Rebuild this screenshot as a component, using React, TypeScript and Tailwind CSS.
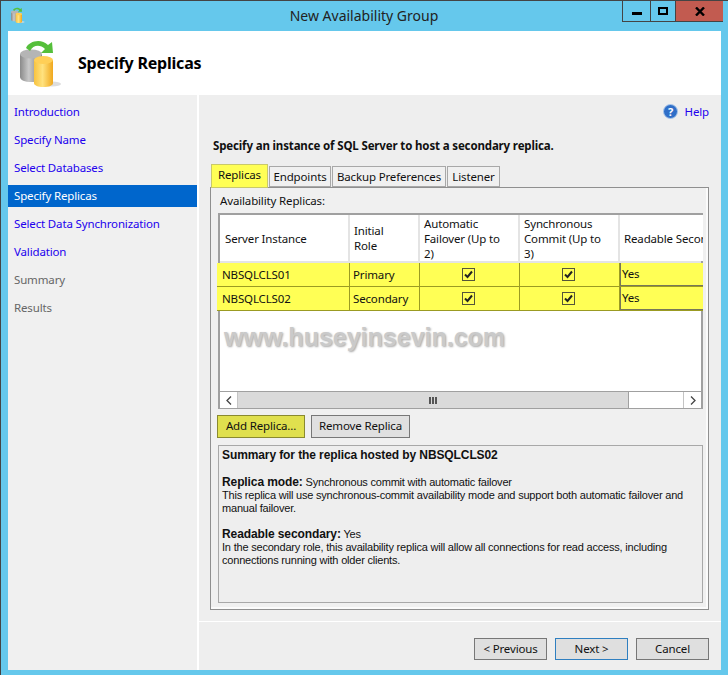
const ui = { fontFamily: '"Noto Sans", sans-serif' };
const arial = { fontFamily: '"Liberation Sans", sans-serif' };

function ReplicaIcon({ size }: { size: number }) {
  return (
    <svg width={size} height={size} viewBox="0 0 48 48">
      <defs>
        <linearGradient id={`g${size}`} x1="0" x2="1" y1="0" y2="0">
          <stop offset="0" stopColor="#8a8a8a" />
          <stop offset="0.4" stopColor="#c9c9c9" />
          <stop offset="1" stopColor="#777" />
        </linearGradient>
        <linearGradient id={`y${size}`} x1="0" x2="1" y1="0" y2="0">
          <stop offset="0" stopColor="#f8c33f" />
          <stop offset="0.45" stopColor="#ffe27f" />
          <stop offset="1" stopColor="#f0a81e" />
        </linearGradient>
      </defs>
      <ellipse cx="32" cy="45" rx="9" ry="2.5" fill="#dddddd" />
      <path d="M0 15v23c0 3 5 5 11 5s11-2 11-5V15z" fill={`url(#g${size})`} />
      <ellipse cx="11" cy="15" rx="11" ry="4.5" fill="#b5b5b5" />
      <path d="M14 21v23c0 2.500 4 4 9.500 4s9.500-1.500 9.500-4V21z" fill={`url(#y${size})`} />
      <ellipse cx="23.500" cy="21" rx="9.500" ry="4" fill="#ffcf57" />
      <path d="M6 9C9 2 21-1 28 6l4-3 1 11H21l4-4C20 5 13 6 10 12z" fill="#55bf3b" />
    </svg>
  );
}

function Check() {
  return (
    <div className="mr-[2px] flex h-[13px] w-[13px] items-center justify-center border border-[#55553a]">
      <svg width="9" height="9" viewBox="0 0 9 9">
        <path d="M1 4.500 3.500 7 8 1.500" fill="none" stroke="#222" strokeWidth="2" />
      </svg>
    </div>
  );
}

function Btn({ label, className }: { label: string; className: string }) {
  return (
    <div className={`flex items-center justify-center border pb-[2px] text-[#111] ${className}`}>{label}</div>
  );
}

const cols = "grid grid-cols-[130px_70px_100px_100px_83px]";

const navItems = [
  { label: "Introduction", tone: "text-[#2200ee]" },
  { label: "Specify Name", tone: "text-[#2200ee]" },
  { label: "Select Databases", tone: "text-[#2200ee]" },
  { label: "Specify Replicas", tone: "bg-[#0066cc] text-white" },
  { label: "Select Data Synchronization", tone: "text-[#2200ee]" },
  { label: "Validation", tone: "text-[#2200ee]" },
  { label: "Summary", tone: "text-[#666]" },
  { label: "Results", tone: "text-[#666]" },
];

const headers = [
  ["Server Instance"],
  ["Initial", "Role"],
  ["Automatic", "Failover (Up to", "2)"],
  ["Synchronous", "Commit (Up to", "3)"],
  ["Readable Secondary"],
];

const rows = ["NBSQLCLS01", "NBSQLCLS02"];
const roles = ["Primary", "Secondary"];

export default function App() {
  return (
    <div style={ui} className="flex h-[675px] w-[728px] flex-col overflow-hidden border-l border-t border-[#444] bg-[#65c8ec] text-[11.5px] leading-[15px] tracking-[-0.15px] text-[#111]">
      {/* title bar */}
      <div className="grid h-[30px] grid-cols-[1fr_auto_1fr] pl-[4px] pr-[5px]">
        <div className="pl-[6px] pt-[6px]">
          <ReplicaIcon size={16} />
        </div>
        <div className="pt-[6px] text-[14px] leading-[18px] tracking-normal text-[#222]">New Availability Group</div>
        <div className="flex justify-end">
          <div className="flex h-[21px] border-b border-l border-[#444] bg-[#65c8ec]">
            <div className="flex w-[28px] items-center justify-center border-r border-[#444]">
              <div className="h-[3px] w-[10px] translate-y-[2px] bg-black" />
            </div>
            <div className="flex w-[25px] items-center justify-center border-r border-[#444]">
              <div className="h-[8px] w-[10px] border-2 border-black" />
            </div>
            <div className="flex w-[47px] items-center justify-center bg-[#c25b50]">
              <svg width="10" height="9" viewBox="0 0 10 9">
                <path d="M1 .5 9 8.500M9 .5 1 8.500" stroke="#000" strokeWidth="2.400" />
              </svg>
            </div>
          </div>
        </div>
      </div>

      {/* dialog */}
      <div className="ml-[7px] flex h-[639px] w-[713px] flex-col bg-white">
        <div className="flex h-[64px] items-center pl-[12px]">
          <ReplicaIcon size={48} />
          <div className="ml-[10px] text-[16px] font-bold tracking-[-0.2px] text-black">Specify Replicas</div>
        </div>

        <div className="flex flex-1">
          <div className="flex w-[189px] flex-col gap-[6px] bg-[#f0f0f0] pt-[6px]">
            {navItems.map((n) => (
              <div key={n.label} className={`flex h-[22px] items-center pb-[2px] pl-[6px] ${n.tone}`}>
                {n.label}
              </div>
            ))}
          </div>
          <div className="ml-[2px] flex flex-1 flex-col bg-[#eeeeee] pl-[11px] pr-[12px]">
            <div className="flex h-[34px] items-center justify-end gap-[7px] pb-[2px] text-[#2200ee]">
              <svg width="15" height="15" viewBox="0 0 15 15">
                <circle cx="7.500" cy="7.500" r="7" fill="#2f6fc8" stroke="#a9c6ea" />
                <text x="7.500" y="11.500" textAnchor="middle" fontSize="11" fontWeight="700" fill="#fff">?</text>
              </svg>
              <span>Help</span>
            </div>
            <div className="mt-[9px] pl-[3px] font-bold text-[#111]">
              Specify an instance of SQL Server to host a secondary replica.
            </div>

            {/* tabs */}
            <div className="relative z-10 mt-[11px] flex h-[23px] items-end gap-[1px] pl-[1px]">
              <div className="flex h-[24px] w-[57px] translate-y-[1px] items-center justify-center border border-[#c9c96a] bg-[#ffff55] pb-[3px]">Replicas</div>
              <div className="flex h-[21px] w-[62px] items-center justify-center border border-[#a8a8a8] bg-[#f0f0f0] pb-[1px]">Endpoints</div>
              <div className="flex h-[21px] w-[114px] items-center justify-center border border-[#a8a8a8] bg-[#f0f0f0] pb-[1px]">Backup Preferences</div>
              <div className="flex h-[21px] w-[53px] items-center justify-center border border-[#a8a8a8] bg-[#f0f0f0] pb-[1px]">Listener</div>
            </div>

            {/* tab page */}
            <div className="h-[423px] w-[499px] border border-[#8f8f8f] bg-[#f0f0f0] pl-[7px] pr-[5px] shadow-[inset_-2px_-2px_0_#fbfbfb]">
              <div className="pl-[2px] pt-[5px] leading-[16px]">Availability Replicas:</div>
              <div className="mt-[4px] h-[196px] w-[485px] border-2 border-[#a0a0a0] bg-white">
                <div className={`${cols} h-[48px] bg-[#e4e4e4]`}>
                  {headers.map((lines, i) => (
                    <div
                      key={lines[0]}
                      className={`mr-[2px] flex h-[46px] flex-col justify-center overflow-hidden whitespace-nowrap bg-white last:mr-0 ${i === 0 ? "pl-[5px]" : "pl-[4px]"}`}
                    >
                      {lines.map((l) => (
                        <span key={l}>{l}</span>
                      ))}
                    </div>
                  ))}
                </div>
                {rows.map((r, i) => (
                  <div key={r} className={`${cols} -ml-[3px] h-[24px] w-[486px] border-b border-[#9b9b22] bg-[#ffff55] pl-[3px]`}>
                    <div className="flex items-center border-r border-[#9b9b22] pb-[1px] pl-[2px]">{r}</div>
                    <div className="flex items-center border-r border-[#9b9b22] pb-[1px] pl-[3px]">{roles[i]}</div>
                    <div className="flex items-center justify-center border-r border-[#9b9b22]"><Check /></div>
                    <div className="flex items-center justify-center border-r border-[#9b9b22]"><Check /></div>
                    <div className="flex items-center border-b border-l border-[#77775a] pb-[1px] pl-[1px]">Yes</div>
                  </div>
                ))}
                <div className="h-[80px] pl-[4px] pt-[11px]">
                  <span
                    style={arial}
                    className="text-[25px] font-bold leading-[30px] tracking-normal text-[#cacaca] [text-shadow:1px_1px_2px_#aaa]"
                  >
                    www.huseyinsevin.com
                  </span>
                </div>
                <div className="flex h-[17px] border-t border-[#a0a0a0]">
                  <div className="flex w-[17px] items-center justify-center bg-white text-[#444]">
                    <svg width="8" height="9" viewBox="0 0 8 9"><path d="M6 .5 2 4.500 6 8.500" fill="none" stroke="#444" strokeWidth="1.300" /></svg>
                  </div>
                  <div className="flex flex-1 border-x border-[#c4c4c4] bg-white">
                    <div className="flex w-[391px] items-center justify-center border-r border-[#a0a0a0] bg-[#dadada]">
                      <div className="flex gap-[1px]">
                        <div className="h-[7px] w-[2px] bg-[#555]" />
                        <div className="h-[7px] w-[2px] bg-[#555]" />
                        <div className="h-[7px] w-[2px] bg-[#555]" />
                      </div>
                    </div>
                  </div>
                  <div className="flex w-[17px] items-center justify-center bg-white">
                    <svg width="8" height="9" viewBox="0 0 8 9"><path d="M2 .5 6 4.500 2 8.500" fill="none" stroke="#444" strokeWidth="1.300" /></svg>
                  </div>
                </div>
              </div>

              <div className="mt-[6px] flex gap-[6px]">
                <Btn label="Add Replica..." className="-ml-[1px] h-[23px] w-[88px] border-[#8a8a30] bg-[#e0e04e]" />
                <Btn label="Remove Replica" className="h-[23px] w-[99px] border-[#777] bg-[#e0e0e0]" />
              </div>

              <div
                style={arial}
                className="mt-[7px] h-[158px] w-[485px] border border-[#a8a8a8] bg-[#eeeeee] px-[3px] pt-[2px] text-[11px] leading-[13px] tracking-[-0.2px]"
              >
                <div className="text-[12px] font-bold leading-[14px] tracking-[-0.1px] text-[#111]">Summary for the replica hosted by NBSQLCLS02</div>
                <div className="mt-[14px]">
                  <b className="text-[12px] tracking-[-0.1px]">Replica mode:</b> Synchronous commit with automatic failover
                </div>
                <div>
                  This replica will use synchronous-commit availability mode and support both automatic failover and manual failover.
                </div>
                <div className="mt-[13px]">
                  <b className="text-[12px] tracking-[-0.1px]">Readable secondary:</b> Yes
                </div>
                <div>
                  In the secondary role, this availability replica will allow all connections for read access, including connections running with older clients.
                </div>
              </div>
            </div>

            {/* footer */}
            <div className="-ml-[11px] -mr-[12px] mt-[11px] flex flex-1 items-start justify-end gap-[8px] border-t border-white pr-[12px] pt-[16px]">
              <Btn label="< Previous" className="h-[22px] w-[73px] border-[#777] bg-[#dfdfdf]" />
              <Btn label="Next >" className="h-[22px] w-[73px] border-[#2f7fc0] bg-[#dfdfdf]" />
              <Btn label="Cancel" className="h-[22px] w-[73px] border-[#777] bg-[#dfdfdf]" />
            </div>
          </div>
        </div>
      </div>
    </div>
  );
}
